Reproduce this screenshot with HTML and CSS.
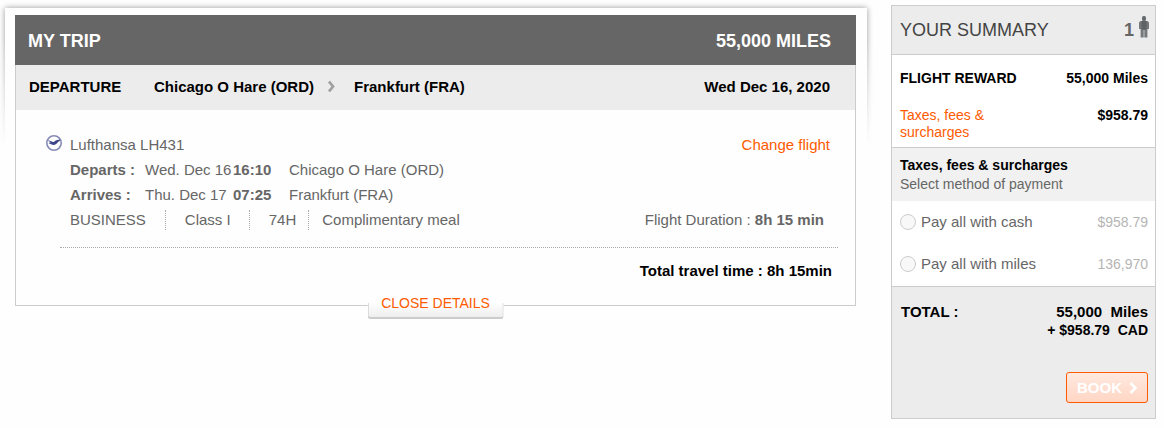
FILE: index.html
```html
<!DOCTYPE html>
<html lang="en">
<head>
    <meta charset="UTF-8">
    <meta name="viewport" content="width=device-width, initial-scale=1.0">
    <title>My trip</title>
    <link rel="stylesheet" href="styles.css">
</head>
<body>
<div class="page">
    <main class="trip-panel">
        <section class="trip">
            <header class="trip-header">
                <h1>MY TRIP</h1>
                <span>55,000 MILES</span>
            </header>
            <div class="trip-bound">
                <h2 class="bound-label">DEPARTURE</h2>
                <span>Chicago O Hare (ORD)</span>
                <svg class="bound-arrow" width="8" height="13" viewBox="0 0 8 13">
                    <path d="M1 1.5 L5 6.5 L1 11.5" fill="none" stroke="#a0a0a0" stroke-width="2.8"/>
                </svg>
                <span>Frankfurt (FRA)</span>
                <span class="bound-date">Wed Dec 16, 2020</span>
            </div>
            <div class="flight">
                <div class="flight-row">
                    <svg class="airline-logo" width="16" height="16" viewBox="0 0 16 16">
                        <circle cx="8" cy="8" r="7.2" fill="#fff" stroke="#868bb5" stroke-width="1.6"/>
                        <path d="M1.5 5.2 C4 5.4 5.4 6.4 7 6.9 C8.6 7 9.2 5.2 11 4.9 L14.6 4.6 L13.4 6.2 C11.6 6.4 11 9.2 8.8 9.8 C6.4 10.2 4.4 9 2.4 8.2 L5 8 L2 6.8 L4.4 6.8 Z" fill="#3d4686"/>
                    </svg>
                    <span>Lufthansa LH431</span>
                    <a class="push-right" href="#">Change flight</a>
                </div>
                <div class="flight-text">
                    <div class="flight-row">
                        <strong class="col-label">Departs :</strong>
                        <span class="col-date">Wed. Dec 16</span>
                        <strong class="col-time">16:10</strong>
                        <span>Chicago O Hare (ORD)</span>
                    </div>
                    <div class="flight-row">
                        <strong class="col-label">Arrives :</strong>
                        <span class="col-date">Thu. Dec 17</span>
                        <strong class="col-time">07:25</strong>
                        <span>Frankfurt (FRA)</span>
                    </div>
                    <div class="flight-row">
                        <ul class="flight-info">
                            <li>BUSINESS</li>
                            <li>Class I</li>
                            <li>74H</li>
                            <li>Complimentary meal</li>
                        </ul>
                        <span class="duration">Flight Duration : <strong>8h 15 min</strong></span>
                    </div>
                </div>
                <p class="total-time">Total travel time : 8h 15min</p>
            </div>
            <a class="close-details" href="#">CLOSE DETAILS</a>
        </section>
    </main>

    <aside class="summary">
        <header class="summary-header">
            <h2>YOUR SUMMARY</h2>
            <span class="passengers">1
                <svg width="10" height="22" viewBox="0 0 10 22">
                    <rect x="3" y="0" width="4" height="5" rx="1.5" fill="#696c6f"/>
                    <path d="M2 5 H8 Q10 5 10 7 V13 H8.4 V21.5 H5.3 V14 H4.7 V21.5 H1.6 V13 H0 V7 Q0 5 2 5 Z" fill="#76797c"/>
                    <path d="M2.4 5 H7.6 V13.5 H2.4 Z" fill="#606366"/>
                </svg>
            </span>
        </header>
        <div class="summary-prices">
            <div class="price-row">
                <strong>FLIGHT REWARD</strong>
                <strong>55,000 Miles</strong>
            </div>
            <div class="price-row">
                <a class="taxes-link" href="#">Taxes, fees &amp; surcharges</a>
                <strong>$958.79</strong>
            </div>
        </div>
        <div class="payment-title">
            <h3>Taxes, fees &amp; surcharges</h3>
            <p>Select method of payment</p>
        </div>
        <form>
            <div class="payment-options">
                <div class="payment-option">
                    <input type="radio" name="payment" id="pay-cash" disabled>
                    <label for="pay-cash">Pay all with cash</label>
                    <span>$958.79</span>
                </div>
                <div class="payment-option">
                    <input type="radio" name="payment" id="pay-miles" disabled>
                    <label for="pay-miles">Pay all with miles</label>
                    <span>136,970</span>
                </div>
            </div>
            <div class="summary-total">
                <div class="total-row">
                    <span>TOTAL :</span>
                    <span>55,000&nbsp; Miles</span>
                </div>
                <div class="total-cash">+ $958.79&nbsp; CAD</div>
                <button class="book-button" type="submit" disabled>
                    BOOK
                    <svg width="9" height="12" viewBox="0 0 9 12">
                        <path d="M1.5 1 L6.5 6 L1.5 11" fill="none" stroke="#fff" stroke-width="2.6"/>
                    </svg>
                </button>
            </div>
        </form>
    </aside>
</div>
</body>
</html>
```

FILE: styles.css
```css
* {
    box-sizing: border-box;
}

body {
    margin: 0;
    font-family: "Liberation Sans", Arial, sans-serif;
    font-size: 15px;
    color: #666;
    background-color: #fefefe;
}

h1, h2, h3, p, ul {
    margin: 0;
    padding: 0;
}

a {
    color: #ff5a00;
    text-decoration: none;
}

a:hover {
    text-decoration: underline;
}

.page {
    display: flex;
    align-items: flex-start;
    gap: 24px;
    padding: 5px 8px 8px 5px;
}

/* Trip */
.trip-panel {
    position: relative;
    flex: 1;
    margin-top: 3px;
    padding: 7px 11px 0 10px;
}

/* shadow round the top of the panel */
.trip-panel::before {
    content: "";
    position: absolute;
    inset: 0 0 auto 0;
    height: 150px;
    box-shadow: 0 0 6px rgba(0, 0, 0, 0.4);
}

/* fades the side shadows out downwards */
.trip-panel::after {
    content: "";
    position: absolute;
    inset: 30px -10px auto -5px;
    height: 135px;
    background: linear-gradient(rgba(254, 254, 254, 0), #fefefe 80%);
}

.trip {
    position: relative;
    z-index: 1;
    border: 1px solid #ccc;
    border-top: 0;
    background-color: #fefefe;
}

.trip-header {
    display: flex;
    justify-content: space-between;
    align-items: center;
    height: 50px;
    margin: 0 -1px;
    padding: 2px 25px 0 13px;
    font-size: 18px;
    font-weight: bold;
    color: #fff;
    background-color: #666;
}

.trip-header h1 {
    font-size: 18px;
}

.trip-bound {
    display: flex;
    align-items: center;
    height: 45px;
    padding: 0 25px 2px 13px;
    font-weight: bold;
    color: #000;
    background-color: #ececec;
}

.bound-label {
    width: 125px;
    font-size: 15px;
}

.bound-arrow {
    margin: 0 18px 0 14px;
}

.bound-date,
.push-right {
    margin-left: auto;
}

.flight {
    padding: 22px 17px 22px 30px;
}

.flight-row {
    display: flex;
    align-items: center;
    line-height: 25px;
}

.push-right {
    margin-right: 8px;
}

.airline-logo {
    margin: 0 8px 4px 0;
}

.flight-text {
    margin-left: 14px;
    padding: 0 14px 15px 10px;
    border-bottom: 1px dotted #aaa;
}

.col-label {
    width: 75px;
}

.col-date {
    width: 88px;
}

.col-time {
    width: 56px;
}

.flight-info {
    display: flex;
    line-height: 20px;
    list-style: none;
}

.flight-info li {
    padding: 0 18px 0 19px;
    border-right: 1px dotted #aaa;
}

.flight-info li:first-child {
    padding: 0 19px 0 0;
}

.flight-info li:nth-child(3) {
    padding-right: 12px;
}

.flight-info li:last-child {
    padding: 0 13px;
    border-right: 0;
}

.duration {
    margin-left: auto;
}

.total-time {
    padding: 10px 6px 0 0;
    font-weight: bold;
    line-height: 25px;
    text-align: right;
    color: #000;
}

.close-details {
    position: absolute;
    bottom: -14px;
    left: 50%;
    transform: translateX(-50%);
    padding: 0 14px 2px;
    font-size: 14px;
    line-height: 28px;
    background-color: #fefefe;
}

/* the part of the tab that hangs below the panel border */
.close-details::before {
    content: "";
    position: absolute;
    inset: auto 0 0 0;
    z-index: -1;
    height: 14px;
    border: solid #ccc;
    border-width: 0 1px 2px;
    border-radius: 0 0 3px 3px;
    background: linear-gradient(#fefefe, #eee);
}

/* Summary */
.summary {
    width: 265px;
    border: 1px solid #ccc;
    font-size: 14px;
    background-color: #fff;
}

.summary-header {
    display: flex;
    justify-content: space-between;
    align-items: center;
    height: 49px;
    padding: 0 6px 0 8px;
    border-bottom: 1px solid #ccc;
    background-color: #ececec;
}

.summary-header h2 {
    font-size: 18px;
    font-weight: normal;
    color: #444;
}

.passengers {
    display: flex;
    align-items: center;
    gap: 5px;
    font-size: 18px;
    font-weight: bold;
}

.passengers svg {
    margin-bottom: 6px;
}

.summary-prices {
    padding: 15px 7px 6px 8px;
    border-bottom: 1px solid #ccc;
    line-height: 17px;
    color: #000;
}

.price-row {
    display: flex;
    justify-content: space-between;
}

.price-row + .price-row {
    margin-top: 20px;
}

.taxes-link {
    width: 110px;
}

.payment-title {
    padding: 8px 8px 7px;
    line-height: 19px;
    background-color: #f1f1f1;
}

.payment-title h3 {
    font-size: 14px;
    color: #000;
}

.payment-options {
    padding-bottom: 1px;
    border-bottom: 1px solid #ccc;
}

.payment-option {
    display: flex;
    align-items: center;
    padding: 0 7px 0 8px;
    line-height: 42px;
}

.payment-option label {
    font-size: 15px;
}

.payment-option span {
    margin-left: auto;
    color: #b5b5b5;
}

.payment-option input {
    appearance: none;
    width: 16px;
    height: 16px;
    margin: 0 5px 0 0;
    border: 1px solid #ccc;
    border-radius: 50%;
    background-color: #f8f8f8;
}

.summary-total {
    display: flex;
    flex-direction: column;
    padding: 15px 7px;
    font-weight: bold;
    line-height: 19px;
    color: #000;
    background-color: #ececec;
}

.total-row {
    display: flex;
    justify-content: space-between;
    padding-left: 2px;
    font-size: 15px;
}

.total-cash {
    text-align: right;
}

.book-button {
    display: flex;
    align-items: center;
    align-self: flex-end;
    gap: 7px;
    height: 31px;
    margin-top: 32px;
    padding: 0 9px 0 10px;
    border: 1px solid #ff5a00;
    border-radius: 3px;
    font-family: inherit;
    font-size: 15px;
    font-weight: bold;
    color: #fff;
    background: linear-gradient(#ffe9e0, #ffd6c4);
}
```
